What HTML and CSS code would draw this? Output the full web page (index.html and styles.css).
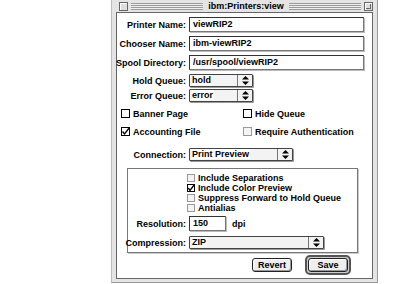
FILE: index.html
```html
<!DOCTYPE html>
<html lang="en">

<head>
    <meta charset="UTF-8">
    <title>ibm:Printers:view</title>
    <link rel="stylesheet" href="styles.css">
</head>

<body>

    <div class="window">
        <!-- title bar -->
        <div class="titlebar">
            <span class="closebox"></span>
            <div class="stripes"></div>
            <span class="title">ibm:Printers:view</span>
            <div class="stripes"></div>
            <span class="zoombox"><span class="zoombox-inner"></span></span>
        </div>

        <div class="content">
            <!-- text fields -->
            <div class="fields">
                <label>Printer Name:</label>
                <div class="field">viewRIP2</div>
                <label>Chooser Name:</label>
                <div class="field">ibm-viewRIP2</div>
                <label>Spool Directory:</label>
                <div class="field">/usr/spool/viewRIP2</div>
            </div>

            <!-- queues -->
            <div class="popups">
                <label>Hold Queue:</label>
                <div class="popup popup-short">
                    <span class="popup-text"><span class="popup-value">hold</span></span>
                    <span class="popup-arrow"><svg width="7" height="9" viewBox="0 0 7 9"><polygon points="3.5,0 7,3.5 0,3.5" /><polygon points="0,5.5 7,5.5 3.5,9" /></svg></span>
                </div>
                <label>Error Queue:</label>
                <div class="popup popup-short">
                    <span class="popup-text"><span class="popup-value">error</span></span>
                    <span class="popup-arrow"><svg width="7" height="9" viewBox="0 0 7 9"><polygon points="3.5,0 7,3.5 0,3.5" /><polygon points="0,5.5 7,5.5 3.5,9" /></svg></span>
                </div>
            </div>

            <!-- options -->
            <div class="checks">
                <div class="check"><span class="box"></span>Banner Page</div>
                <div class="check"><span class="box"></span>Hide Queue</div>
                <div class="check"><span class="box checked"><svg width="9" height="9" viewBox="0 0 9 9"><path d="M1.5 4.5 L3.5 7 L8.5 0.5" /></svg></span>Accounting File</div>
                <div class="check"><span class="box dim"></span>Require Authentication</div>
            </div>

            <div class="connection">
                <label>Connection:</label>
                <div class="popup popup-conn">
                    <span class="popup-text"><span class="popup-value">Print Preview</span></span>
                    <span class="popup-arrow"><svg width="7" height="9" viewBox="0 0 7 9"><polygon points="3.5,0 7,3.5 0,3.5" /><polygon points="0,5.5 7,5.5 3.5,9" /></svg></span>
                </div>
            </div>

            <!-- preview settings -->
            <div class="group">
                <div class="subchecks">
                    <div class="subcheck"><span class="box small dim"></span>Include Separations</div>
                    <div class="subcheck"><span class="box small checked"><svg width="8" height="8" viewBox="0 0 8 8"><path d="M1.2 4 L3 6.5 L7.5 0.5" /></svg></span>Include Color Preview</div>
                    <div class="subcheck"><span class="box small dim"></span>Suppress Forward to Hold Queue</div>
                    <div class="subcheck"><span class="box small dim"></span>Antialias</div>
                </div>

                <div class="resolution">
                    <label>Resolution:</label>
                    <div class="field">150</div>
                    <span class="unit">dpi</span>
                </div>

                <div class="compression">
                    <label>Compression:</label>
                    <div class="popup popup-comp">
                        <span class="popup-text"><span class="popup-value">ZIP</span></span>
                        <span class="popup-arrow"><svg width="7" height="9" viewBox="0 0 7 9"><polygon points="3.5,0 7,3.5 0,3.5" /><polygon points="0,5.5 7,5.5 3.5,9" /></svg></span>
                    </div>
                </div>
            </div>

            <!-- buttons -->
            <div class="buttons">
                <button class="btn">Revert</button>
                <span class="default-ring"><button class="btn btn-save">Save</button></span>
            </div>
        </div>
    </div>

</body>

</html>
```

FILE: styles.css
```css
body {
    margin: 0;
    background: #fff;
    font-family: "Liberation Sans", Arial, sans-serif;
    font-size: 9px;
    font-weight: bold;
    color: #000;
}

label {
    justify-self: end;
    white-space: nowrap;
}

/* window frame */
.window {
    margin-left: 111px;
    width: 267px;
    height: 283px;
    box-sizing: border-box;
    background: #e4e4e4;
    border-left: 1px solid #bbb;
    border-right: 1px solid #999;
    border-bottom: 1px solid #999;
}

.titlebar {
    height: 12px;
    display: flex;
    align-items: center;
    gap: 3px;
    padding: 0 4px 0 7px;
}

.stripes {
    flex: 1;
    height: 7px;
    background: repeating-linear-gradient(to bottom, #9a9a9a 0 1px, #eee 1px 2px);
}

.title {
    padding: 0 2px;
    line-height: 12px;
}

.closebox,
.zoombox {
    width: 9px;
    height: 9px;
    box-sizing: border-box;
    border: 1px solid #666;
    background: #ddd;
    box-shadow: inset 1px 1px 0 #fff;
}

.zoombox {
    position: relative;
}

.zoombox-inner {
    position: absolute;
    left: 1px;
    top: 1px;
    width: 4px;
    height: 4px;
    border-right: 1px solid #666;
    border-bottom: 1px solid #666;
}

.content {
    margin: 0 4px;
    height: 267px;
    box-sizing: border-box;
    border: 1px solid #666;
    background: #fff;
    padding-top: 4px;
}

/* text fields */
.fields {
    display: grid;
    grid-template-columns: 69px 175px;
    column-gap: 3px;
    row-gap: 4px;
    grid-auto-rows: 15px;
    align-items: center;
}

.field {
    height: 15px;
    box-sizing: border-box;
    border: 1px solid #333;
    border-right-color: #777;
    border-bottom-color: #777;
    box-shadow: 1px 1px 0 #bbb;
    padding-left: 3px;
    line-height: 13px;
}

/* popup menus */
.popups {
    display: grid;
    grid-template-columns: 69px auto;
    column-gap: 3px;
    row-gap: 2px;
    grid-auto-rows: 13px;
    align-items: center;
    margin-top: 4px;
}

.popup {
    display: flex;
    height: 13px;
    box-sizing: border-box;
    border: 1px solid #444;
    border-radius: 1px;
    background: #f3f3f3;
    box-shadow: 1px 1px 0 #999;
}

.popup-short {
    width: 64px;
}

.popup-conn {
    width: 104px;
}

.popup-comp {
    width: 135px;
}

.popup-text {
    flex: 1;
    padding-left: 2px;
    line-height: 11px;
}

.popup-value {
    background: #fff;
    padding-right: 1px;
}

.popup-arrow {
    width: 14px;
    border-left: 1px solid #777;
    display: flex;
    align-items: center;
    justify-content: center;
}

/* checkboxes */
.checks {
    display: grid;
    grid-template-columns: 122px auto;
    row-gap: 7px;
    margin: 6px 0 0 4px;
}

.check {
    display: flex;
    align-items: center;
    gap: 3px;
    height: 11px;
}

.box {
    width: 9px;
    height: 9px;
    box-sizing: border-box;
    border: 1px solid #000;
    background: #fff;
    display: flex;
}

.box.small {
    width: 8px;
    height: 8px;
}

.box.dim {
    border-color: #999;
    background: #f4f4f4;
}

.box svg {
    margin: -1px 0 0 -1px;
    overflow: visible;
}

.box path {
    fill: none;
    stroke: #000;
    stroke-width: 1.3;
}

.connection {
    display: grid;
    grid-template-columns: 69px auto;
    column-gap: 3px;
    align-items: center;
    margin-top: 11px;
}

/* preview group */
.group {
    margin: 7px 0 0 10px;
    width: 231px;
    height: 85px;
    box-sizing: border-box;
    border: 1px solid #777;
    box-shadow: 1px 1px 0 #ccc;
    padding-top: 4px;
}

.subchecks {
    margin-left: 59px;
}

.subcheck {
    display: flex;
    align-items: center;
    gap: 3px;
    height: 10px;
}

.resolution {
    display: grid;
    grid-template-columns: 58px 37px auto;
    column-gap: 3px;
    align-items: center;
    margin-top: 3px;
}

.unit {
    margin-left: 3px;
}

.compression {
    display: grid;
    grid-template-columns: 58px auto;
    column-gap: 3px;
    align-items: center;
    margin-top: 5px;
}

/* buttons */
.buttons {
    display: flex;
    justify-content: flex-end;
    align-items: center;
    gap: 13px;
    margin: 2px 21px 0 0;
}

.btn {
    font: inherit;
    color: #000;
    height: 14px;
    width: 40px;
    padding: 0;
    border: 1px solid #222;
    border-radius: 3px;
    background: #eee;
    box-shadow: inset -1px -1px 0 #999, inset 1px 1px 0 #fff;
}

.default-ring {
    display: flex;
    padding: 1px;
    border: 2px solid #555;
    border-radius: 5px;
    background: #ccc;
}

.btn-save {
    width: 40px;
}
```
